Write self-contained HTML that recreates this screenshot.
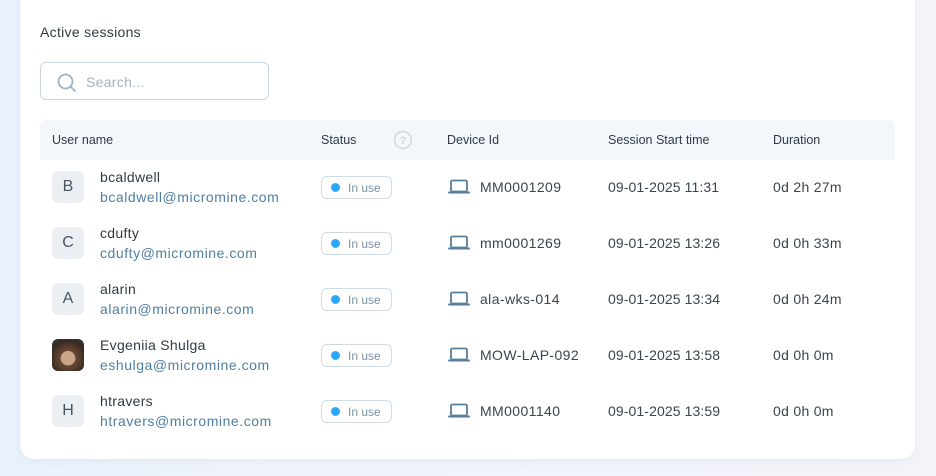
<!DOCTYPE html>
<html><head><style>
*{margin:0;padding:0;box-sizing:border-box}
body{width:936px;height:476px;background:linear-gradient(90deg,#e8f1fc 0%,#f0f4fa 30%,#f2f4fa 100%);font-family:"Liberation Sans",sans-serif;position:relative;overflow:hidden;color:#2f3a45}
.card{position:absolute;left:20px;top:-20px;width:895px;height:479px;background:#fff;border-radius:14px;box-shadow:0 2px 8px rgba(100,130,180,.08)}
.title{position:absolute;left:40px;top:24px;font-size:14px;color:#333c46;letter-spacing:0.3px}
.search{position:absolute;left:40px;top:62px;width:229px;height:38px;border:1px solid #c6d6e4;border-radius:6px}
.search span{position:absolute;left:45px;top:11px;font-size:14px;color:#a6b3bf;letter-spacing:0.3px}
.search svg{position:absolute;left:15px;top:9px}
.head{position:absolute;left:40px;top:120px;width:855px;height:40px;background:#f3f7fb;border-radius:6px 6px 0 0;font-size:12.5px;color:#2f3a45}
.head div{position:absolute;top:13px}
.row{position:absolute;left:40px;width:855px;height:56px;font-size:14px}
.av{position:absolute;left:12px;top:-16px;width:32px;height:32px;border-radius:6px;background:#ebeff3;color:#4a5562;font-size:16px;text-align:center;line-height:32px}
.nm{position:absolute;left:60px;top:-18px;color:#2f3a45;letter-spacing:0.3px}
.em{position:absolute;left:60px;top:2px;color:#4f7fa3;letter-spacing:0.55px}
.st{position:absolute;left:281px;top:-11px;width:71px;height:23px;border:1px solid #cfdce7;border-radius:6px;font-size:12px;color:#7b94a8;line-height:22px;padding-left:26px}
.st:before{content:"";position:absolute;left:9px;top:6px;width:9px;height:9px;border-radius:50%;background:#2aa8ff}
.lap{position:absolute;left:408px;top:-8px}
.dv{position:absolute;left:440px;top:-8px;color:#3a4450;letter-spacing:0.4px}
.ts{position:absolute;left:568px;top:-8px;color:#3a4450;letter-spacing:0.1px}
.du{position:absolute;left:733px;top:-8px;color:#3a4450;letter-spacing:0.3px}
</style></head><body>
<div class="card"></div>
<div class="title">Active sessions</div>
<div class="search"><svg width="22" height="22" viewBox="0 0 22 22"><circle cx="9.5" cy="9.5" r="7" fill="none" stroke="#9cb3c6" stroke-width="1.8"/><line x1="14.5" y1="14.5" x2="19" y2="19" stroke="#9cb3c6" stroke-width="1.8" stroke-linecap="round"/></svg><span>Search...</span></div>
<div class="head">
<div style="left:12px">User name</div><div style="left:281px">Status</div>
<svg style="position:absolute;left:353px;top:10px" width="20" height="20"><circle cx="10" cy="10" r="8.5" fill="none" stroke="#cfd8e0" stroke-width="1.5"/><text x="10" y="14" text-anchor="middle" font-size="11" font-family="Liberation Sans" fill="#cfd8e0" font-weight="bold">?</text></svg>
<div style="left:407px">Device Id</div><div style="left:568px">Session Start time</div><div style="left:733px">Duration</div>
</div>

<div class="row" style="top:187px"><div class="av">B</div><div class="nm">bcaldwell</div><div class="em">bcaldwell@micromine.com</div><div class="st">In use</div><svg class="lap" width="22" height="16" viewBox="0 0 22 16"><rect x="3" y="1.5" width="16" height="11" rx="1.5" fill="none" stroke="#587d9c" stroke-width="1.8"/><path d="M1 13.5h20" stroke="#587d9c" stroke-width="2" stroke-linecap="round"/></svg><div class="dv">MM0001209</div><div class="ts">09-01-2025 11:31</div><div class="du">0d 2h 27m</div></div>
<div class="row" style="top:243px"><div class="av">C</div><div class="nm">cdufty</div><div class="em">cdufty@micromine.com</div><div class="st">In use</div><svg class="lap" width="22" height="16" viewBox="0 0 22 16"><rect x="3" y="1.5" width="16" height="11" rx="1.5" fill="none" stroke="#587d9c" stroke-width="1.8"/><path d="M1 13.5h20" stroke="#587d9c" stroke-width="2" stroke-linecap="round"/></svg><div class="dv">mm0001269</div><div class="ts">09-01-2025 13:26</div><div class="du">0d 0h 33m</div></div>
<div class="row" style="top:299px"><div class="av">A</div><div class="nm">alarin</div><div class="em">alarin@micromine.com</div><div class="st">In use</div><svg class="lap" width="22" height="16" viewBox="0 0 22 16"><rect x="3" y="1.5" width="16" height="11" rx="1.5" fill="none" stroke="#587d9c" stroke-width="1.8"/><path d="M1 13.5h20" stroke="#587d9c" stroke-width="2" stroke-linecap="round"/></svg><div class="dv">ala-wks-014</div><div class="ts">09-01-2025 13:34</div><div class="du">0d 0h 24m</div></div>
<div class="row" style="top:355px"><div class="av" style="background:radial-gradient(circle at 50% 60%,#c9a58a 0 28%,#6b4a36 30%,#3a2a20 70%,#2a3850 100%)"></div><div class="nm">Evgeniia Shulga</div><div class="em">eshulga@micromine.com</div><div class="st">In use</div><svg class="lap" width="22" height="16" viewBox="0 0 22 16"><rect x="3" y="1.5" width="16" height="11" rx="1.5" fill="none" stroke="#587d9c" stroke-width="1.8"/><path d="M1 13.5h20" stroke="#587d9c" stroke-width="2" stroke-linecap="round"/></svg><div class="dv">MOW-LAP-092</div><div class="ts">09-01-2025 13:58</div><div class="du">0d 0h 0m</div></div>
<div class="row" style="top:411px"><div class="av">H</div><div class="nm">htravers</div><div class="em">htravers@micromine.com</div><div class="st">In use</div><svg class="lap" width="22" height="16" viewBox="0 0 22 16"><rect x="3" y="1.5" width="16" height="11" rx="1.5" fill="none" stroke="#587d9c" stroke-width="1.8"/><path d="M1 13.5h20" stroke="#587d9c" stroke-width="2" stroke-linecap="round"/></svg><div class="dv">MM0001140</div><div class="ts">09-01-2025 13:59</div><div class="du">0d 0h 0m</div></div>
</body></html>
